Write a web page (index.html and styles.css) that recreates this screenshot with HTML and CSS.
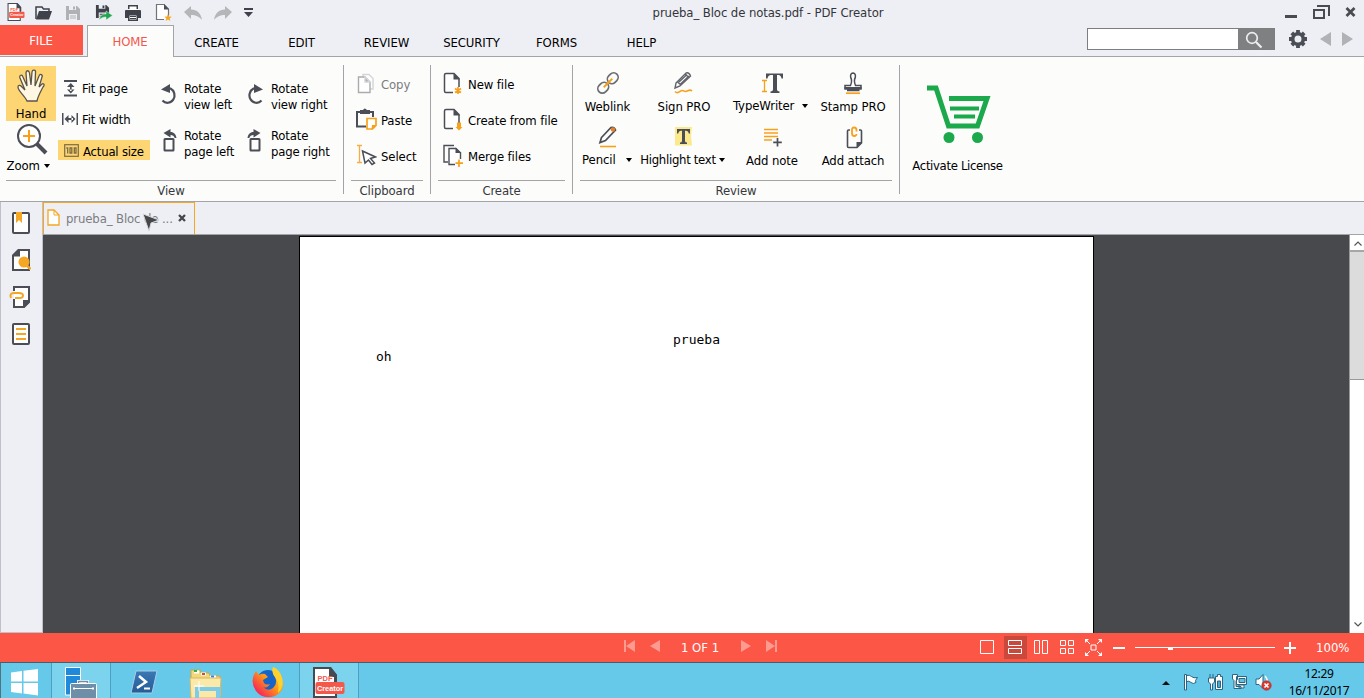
FILE: index.html
```html
<!DOCTYPE html>
<html lang="en">
<head>
<meta charset="utf-8">
<title>PDF Creator</title>
<link rel="stylesheet" href="styles.css">
</head>
<body>
<svg class="defs" width="0" height="0">
  <symbol id="rotl" viewBox="0 0 18 22">
    <path d="M6 4.500h3.500a7 7.500 0 1 1-8 12" fill="none" stroke="#4b4e57" stroke-width="2.200"/>
    <path d="M0 5.500 9 0v9z" fill="#4b4e57"/>
  </symbol>
  <symbol id="rotp" viewBox="0 0 18 24">
    <rect x="3.500" y="11" width="9" height="11.500" rx=".5" fill="none" stroke="#4b4e57" stroke-width="2"/>
    <path d="M2.500 5 9.500 1v3c3.500 0 5.500 2.500 6 6h-1.800c-.6-2-2-3-4.200-3v2.500z" fill="#4b4e57"/>
  </symbol>
  <symbol id="doc" viewBox="0 0 20 24">
    <path d="M10 20.500H2.800Q1.500 20.500 1.500 19V3q0-1.500 1.500-1.500h8l5 5V15" fill="#fff" stroke="#4b4e57" stroke-width="1.500"/>
    <path d="M10.500 1 17 7.500h-6.500z" fill="#4b4e57"/>
  </symbol>
  <symbol id="disk" viewBox="0 0 16 16">
    <path d="M1 1h11l3 3v11H1z"/><path d="M4 1h7v4H4zM4 9h8v6H4z" fill="#eeeff4"/><path d="M8 1.500h2v3H8zM5 10.500h6v1H5zM5 12.500h6v1H5z"/>
  </symbol>
</svg>

<div class="app">
  <header class="titlebar">
    <div class="quick">
      <svg class="q-app logo" width="18" height="18" viewBox="0 0 34 34"><path d="M2 1h17l6 7v25H2z" fill="#fff" stroke="#484a52" stroke-width="2"/><path d="M18 0h2l7 8v8h-3V10h-6z" fill="#484a52"/><rect x="4" y="16.500" width="29" height="12" rx="2" fill="#f4584a"/><text x="6" y="14.500" font-size="7.500" font-weight="700" fill="#f4584a">PDF</text><text x="6" y="25.200" font-size="7.500" font-weight="700" fill="#fff" textLength="25" lengthAdjust="spacingAndGlyphs">Creator</text></svg>
      <svg width="18" height="16" viewBox="0 0 18 16"><path d="M1 14V2h6l1.500 2H14v3" fill="none" stroke="#3f424b" stroke-width="1.500"/><path d="M4 6h13l-3 8.500H1z" fill="#3f424b"/></svg>
      <svg width="16" height="16" fill="#b0b1b5"><use href="#disk"/></svg>
      <svg class="q-gap" width="18" height="17" viewBox="0 0 18 17"><g fill="#3f424b"><use href="#disk" width="15" height="15"/></g><path d="M4 16c1-4 3-6 7-6V7l6.500 4.500L11 16v-3c-3 0-5 1-7 3z" fill="#1ea84b" stroke="#eeeff4" stroke-width=".5"/></svg>
      <svg width="16" height="16" viewBox="0 0 16 16" fill="#3f424b"><path d="M3 0h10v4H3zM1 5h14q1 0 1 1v7h-3v-3H3v3H0V6q0-1 1-1z"/><path d="M4.500 1.500h7V5h-7zM4 10h8v5.300H4z" fill="#fff"/><path d="M3 9h10v7H3zm1.500 1.500v4h7v-4zM5 11h6v1H5zm0 2h6v1H5z"/></svg>
      <svg class="q-gap" width="17" height="19" viewBox="0 0 17 19"><path d="M9 16.500H1.500V1.500H9L13.500 6v7" fill="#fff" stroke="#70737a" stroke-width="1.200"/><path d="M9 1 14 6.500H9z" fill="#4b4e57"/><path d="m13 11 1.100 2.500 2.600.2-2 1.700.7 2.600-2.400-1.400-2.300 1.400.7-2.600-2-1.700 2.600-.2z" fill="#f5a623"/></svg>
      <svg width="18" height="14" viewBox="0 0 18 14"><path d="M0 6 7 0v3.500c6 .2 10 3.500 11 10.500-3-3.500-6-5-11-5V13z" fill="#b5b6ba"/></svg>
      <svg width="18" height="14" viewBox="0 0 18 14"><path d="M18 6 11 0v3.500C5 3.700 1 7 0 14c3-3.500 6-5 11-5v4z" fill="#b5b6ba"/></svg>
      <svg class="q-menu" width="9" height="9" viewBox="0 0 9 9" fill="#3f424b"><path d="M0 0h9v2H0zM0 4h9L4.500 9z"/></svg>
    </div>
    <div class="title">prueba_ Bloc de notas.pdf - PDF Creator</div>
    <svg class="win" width="76" height="16" viewBox="0 0 76 16" fill="none" stroke="#4a4b4f"><path d="M1 12.500h12" stroke-width="3"/><path d="M30 6h10v8H30zM33 2h12v10" stroke-width="2"/><path d="m62.500 4 8 8m0-8-8 8" stroke-width="2.700"/></svg>
  </header>

  <nav class="tabs">
    <div class="file">FILE</div>
    <div class="home">HOME</div>
    <div class="tab">CREATE</div><div class="tab">EDIT</div><div class="tab">REVIEW</div><div class="tab">SECURITY</div><div class="tab">FORMS</div><div class="tab">HELP</div>
    <div class="search"><span class="search-btn"><svg width="18" height="18" viewBox="0 0 18 18" fill="none" stroke="#eee" stroke-width="1.700"><circle cx="7" cy="7" r="5.300"/><path d="m11 11 5.500 5.500" stroke-width="2.200"/></svg></span></div>
    <svg class="gear" width="18" height="18" viewBox="-9 -9 18 18" fill="none" stroke="#4b4e57"><circle r="5.300" stroke-width="3.600"/><path d="M0-9v3M0 9V6M-9 0h3M9 0H6M-6.200-6.200l2 2M6.200-6.200l-2 2M-6.200 6.200l2-2M6.200 6.200l-2-2" stroke-width="3.800"/></svg>
    <svg class="arrows" width="34" height="14" viewBox="0 0 34 14" fill="#b1b2b6"><path d="M11 0v14L0 7zM22 0v14l11-7z"/></svg>
  </nav>

  <section class="ribbon">
    <div class="group g-view">
      <div class="body">
        <div class="col-big">
          <div class="big hand"><svg width="28" height="34" viewBox="0 0 28 34"><path d="M10 32C8 27 1 22 1 18c0-2 2-2 3-1l4 4L3 9C2 6 5 5 6 8l4 9L9 4c0-3 3-3 3.500 0L14 16l1-13c.5-3 4-2 3.500 0L18 17l4-10c1-3 4-1 3 1l-3 10 3-3c2-1 3 1 1 3-3 6-5 9-6 14z" fill="#fff7e3" stroke="#5a5549" stroke-width="1.300"/></svg><span>Hand</span></div>
          <div class="big zoom"><svg width="32" height="32" viewBox="0 0 32 32"><circle cx="13" cy="13" r="11" fill="#fff" stroke="#4b4e57" stroke-width="2"/><path d="m21 21 9 9" stroke="#4b4e57" stroke-width="4"/><path d="M13 7v12M7 13h12" stroke="#f9a01b" stroke-width="2"/></svg><span>Zoom <i class="caret"></i></span></div>
        </div>
        <div class="col-fit">
          <div class="row"><svg width="14" height="17" viewBox="0 0 14 17" fill="#4b4e57"><path d="M0 0h13v2H0zM0 14.500h13v2H0zM6 5h1.600v6H6zM3 7l3.800-4L10.500 7zM3 9.500l3.800 4 3.700-4z"/></svg><span>Fit page</span></div>
          <div class="row fw"><svg width="17" height="14" viewBox="0 0 17 14" fill="#4b4e57"><path d="M0 1h1.500v12H0zM14.500 1H16v12h-1.500zM2.500 7l4-4v8zM13.500 7l-4-4v8zM5 6h6v2H5z"/></svg><span>Fit width</span></div>
          <div class="row actual"><svg width="15" height="13" viewBox="0 0 15 13" fill="none" stroke="#7d6c42"><rect x=".7" y=".7" width="13.600" height="11.600" stroke-width="1.200"/><path d="M2.300 4h1.400v5.500M6 4h1.800v5H6zM10.300 4H12v5h-1.700z" stroke-width="1.300"/></svg><span>Actual size</span></div>
        </div>
        <div class="rot">
          <div class="r"><svg width="18" height="22"><use href="#rotl"/></svg><span>Rotate<br>view left</span></div>
          <div class="r"><svg class="flip" width="18" height="22"><use href="#rotl"/></svg><span>Rotate<br>view right</span></div>
          <div class="r"><svg width="18" height="24"><use href="#rotp"/></svg><span>Rotate<br>page left</span></div>
          <div class="r"><svg class="flip" width="18" height="24"><use href="#rotp"/></svg><span>Rotate<br>page right</span></div>
        </div>
      </div>
      <div class="label">View</div>
    </div>

    <div class="group g-clip">
      <div class="body list">
        <div class="li off"><svg width="22" height="24" viewBox="0 0 22 24" fill="#fff" stroke="#d4d5d7" stroke-width="1.400"><path d="M8 2.500h6l4 4V17H8z"/><path d="M3.500 5H10l5 5v10.500H3.500z" stroke="#aaabad"/><path d="M10 5v5h5z" fill="#aaabad"/></svg><span>Copy</span></div>
        <div class="li"><svg width="22" height="24" viewBox="0 0 22 24"><path d="M11 18.500H2V4h16v5" fill="none" stroke="#4b4e57" stroke-width="2"/><path d="M5 2h3q1.500-3 4 0h3v4H5z" fill="#4b4e57"/><path d="M12 10.500h9v7L17.500 21H12z" fill="#fff" stroke="#f9a01b" stroke-width="1.700"/><path d="M17 17h4.500l-5 5z" fill="#f9a01b"/></svg><span>Paste</span></div>
        <div class="li"><svg width="22" height="24" viewBox="0 0 22 24" fill="none"><path d="M2 1.500h5M4.500 1.500v17M2 18.500h5" stroke="#f5ad45" stroke-width="1.300"/><path d="m7.500 7 13 6-5 1.500 4 4.500-2.500 1.500-3.500-4.500-3.500 3z" fill="#fff" stroke="#4b4e57" stroke-width="1.500"/></svg><span>Select</span></div>
      </div>
      <div class="label">Clipboard</div>
    </div>

    <div class="group g-create">
      <div class="body list">
        <div class="li"><svg width="20" height="24" viewBox="0 0 20 24"><use href="#doc"/><path d="M15 15v7M12 16.500l6 4m0-4-6 4" stroke="#f9a01b" stroke-width="1.700"/></svg><span>New file</span></div>
        <div class="li"><svg width="20" height="24" viewBox="0 0 20 24"><use href="#doc"/><path d="M14 14.500h4V19h1.500L16 22.500 12.500 19H14z" fill="#f9a01b"/></svg><span>Create from file</span></div>
        <div class="li"><svg width="20" height="24" viewBox="0 0 20 24"><path d="M5 18H1V1.500h10" fill="none" stroke="#4b4e57" stroke-width="1.400"/><path d="M12 20.500H6V4.500h7l4.500 4.500v6" fill="#fff" stroke="#4b4e57" stroke-width="1.400"/><path d="M12.500 3.500 18.500 9h-6z" fill="#4b4e57"/><path d="M16 15.500V23M12.500 19.200H20" stroke="#f9a01b" stroke-width="1.700"/></svg><span>Merge files</span></div>
      </div>
      <div class="label">Create</div>
    </div>

    <div class="group g-review">
      <div class="body tools">
        <div class="t"><svg width="24" height="24" viewBox="0 0 24 24" fill="none" stroke="#6b6d73" stroke-width="1.700"><g transform="rotate(-45 12 12)"><rect x="-.5" y="7.500" width="11.500" height="9" rx="4.500"/><rect x="13" y="7.500" width="11.500" height="9" rx="4.500"/><path d="M6 12h12" stroke="#f9a01b" stroke-width="2"/></g></svg><span>Weblink</span></div>
        <div class="t"><svg width="24" height="24" viewBox="0 0 24 24" fill="none"><path d="m4 12 10-10q3-1 4.500 3L8 15l-5 2zM13 3l4.500 4M5.500 11 9 14M7 11l8-7.500M8.500 13 17 5" stroke="#62646b" stroke-width="1.400"/><path d="M3 20.500c4 4 5-3 9-.5 3 2 5-3 8 0" stroke="#f9a01b" stroke-width="1.500"/></svg><span>Sign PRO</span></div>
        <div class="t up"><svg width="24" height="24" viewBox="0 0 24 24"><path d="M6 2.500h17v5h-1.500Q21 4 18.500 4H17v14.500q0 2 2.500 2V22h-9v-1.500q2.500 0 2.500-2V4h-2Q8 4 7.500 7.500H6z" fill="#4b4e57"/><path d="M2 9.500h5M4.500 9.500v11M2 20.500h5" stroke="#f9a01b" stroke-width="1.300"/></svg><span>TypeWriter <i class="caret"></i></span></div>
        <div class="t"><svg width="24" height="24" viewBox="0 0 24 24"><path d="M9.500 14.500q2-5 .2-8-.7-4 2.300-4.500 3 .5 2.300 4.500-1.800 3 .2 8H20v3.500H4v-3.500z" fill="#fff" stroke="#4b4e57" stroke-width="1.500"/><path d="M3.500 16h17v2h-2v2.200H6V18H3.500z" fill="#4b4e57"/><path d="M5 22.200h14" stroke="#f9a01b" stroke-width="1.700"/></svg><span>Stamp PRO</span></div>
        <div class="t up2"><svg width="24" height="24" viewBox="0 0 24 24" fill="none"><path d="M5.500 12.500 15 2.500q3-1 4.500 2.500l-10 10.500-5.500 2z" stroke="#4b4e57" stroke-width="1.700"/><circle cx="17" cy="4.500" r="2.200" fill="#e87e20"/><path d="M4 21.500h16" stroke="#f9a01b" stroke-width="1.600"/></svg><span>Pencil &nbsp;<i class="caret"></i></span></div>
        <div class="t up2 hl"><svg width="24" height="24" viewBox="0 0 24 24"><path d="M3 2h17l-1 9 1 9.500H3z" fill="#fce98c"/><path d="M5 4h13v4.500h-1.300Q16.300 5.700 14 5.700h-1V16q0 1.500 2 1.500V19H8v-1.500q2 0 2-1.500V5.700H9Q6.700 5.700 6.300 8.500H5z" fill="#4b4e57"/></svg><span>Highlight text<i class="caret"></i></span></div>
        <div class="t"><svg width="24" height="24" viewBox="0 0 24 24" fill="none" stroke="#f9a01b" stroke-width="1.700"><path d="M4 4.500h14M4 8h14M4 11.500h14M4 15h8"/><path d="M17.500 13v8.500M13.200 17.300h8.600" stroke="#4b4e57"/></svg><span>Add note</span></div>
        <div class="t"><svg width="24" height="24" viewBox="0 0 24 24" fill="none"><path d="M9 5H7.500q-1 0-1 1v15.500q0 1 1 1h8.500l4.500-4.500V6q0-1-1-1H18" stroke="#4b4e57" stroke-width="1.600"/><path d="M21 17v.5L15.500 23v-6z" fill="#4b4e57"/><path d="M15.500 6.500V5q0-2.500-2.300-2.500T11 5v3.500q0 2.500 2.300 2.500 2 0 2.200-2" stroke="#f9a01b" stroke-width="1.800"/></svg><span>Add attach</span></div>
      </div>
      <div class="label">Review</div>
    </div>

    <div class="license">
      <svg width="64" height="60" viewBox="0 0 64 60" fill="none" stroke="#1ba94c"><path d="M0 3h9l12.500 38h29l9.500-27.500H22" stroke-width="5"/><path d="M23 23.500h29M27 31.500h21" stroke-width="4"/><circle cx="22" cy="52.500" r="5.500" fill="#1ba94c" stroke="none"/><circle cx="50.500" cy="52.500" r="5.500" fill="#1ba94c" stroke="none"/></svg>
      <span>Activate License</span>
    </div>
  </section>

  <main class="work">
    <aside class="side">
      <svg width="20" height="24" viewBox="0 0 20 24"><rect x="2" y="2" width="16" height="20" rx="1" fill="#fff" stroke="#4b4e57" stroke-width="2"/><path d="M5 1h6v11l-3-3-3 3z" fill="#f5a623"/></svg>
      <svg width="20" height="24" viewBox="0 0 20 24"><path d="M2 8 8 2h10v20H2z" fill="#fff" stroke="#4b4e57" stroke-width="2"/><path d="M1 8.500V7l6-6h2v7.500z" fill="#4b4e57"/><circle cx="13" cy="14" r="5.500" fill="#f5a623"/><path d="m15 17 4.500 4" stroke="#f5a623" stroke-width="2.500"/></svg>
      <svg class="clip" width="20" height="24" viewBox="0 0 20 24"><path d="M3 6V2h15v15l-5 5H3v-8" fill="#fff" stroke="#4b4e57" stroke-width="2"/><path d="M19 15v2l-6 6h-1v-8z" fill="#4b4e57"/><path d="M0 13q-2-5 3-5h5q4 0 4 2.500T8 13H4" fill="none" stroke="#f5a623" stroke-width="2"/></svg>
      <svg width="20" height="24" viewBox="0 0 20 24"><rect x="2" y="2" width="16" height="20" rx="1" fill="#fff" stroke="#4b4e57" stroke-width="2"/><path d="M5 7h10M5 12h10M5 17h10" stroke="#f5a623" stroke-width="2"/></svg>
    </aside>
    <div class="docs">
      <div class="doctabs">
        <div class="doctab">
          <svg width="13" height="17" viewBox="0 0 13 17"><path d="M1 1h6l5 5v10H1z" fill="#fff" stroke="#f5a623" stroke-width="1.300"/><path d="M7 1v5h5" fill="none" stroke="#f5a623"/></svg>
          <span>prueba_ Bloc de ...</span>
          <svg class="x" width="8" height="8" viewBox="0 0 8 8"><path d="m1 1 6 6m0-6L1 7" stroke="#44464d" stroke-width="2.300"/></svg>
          <svg class="cursor" width="18" height="20" viewBox="0 0 18 20"><path d="m1 2 16 6-8 3-2 8z" fill="#45474d" stroke="#d8d9dc" stroke-width="1"/></svg>
        </div>
      </div>
      <div class="view">
        <div class="canvas"><article class="page"><p class="center">prueba</p><p class="left">oh</p></article></div>
        <div class="scroll">
          <div class="sb"><svg width="8" height="5" viewBox="0 0 8 5"><path d="m.5 4.500 3.500-3.500 3.500 3.500" fill="none" stroke="#555" stroke-width="1.200"/></svg></div>
          <div class="thumb"></div>
          <div class="track"></div>
          <div class="sb dn"><svg width="8" height="5" viewBox="0 0 8 5"><path d="m.5.500 3.500 3.500 3.500-3.500" fill="none" stroke="#555" stroke-width="1.200"/></svg></div>
        </div>
      </div>
    </div>
  </main>

  <footer class="status">
    <div class="pager">
      <svg width="38" height="12" viewBox="0 0 38 12" fill="#fd9b90"><path d="M0 0h2v12H0zM11 0v12L2 6zM36 0v12L26 6z"/></svg>
      <span>1 OF 1</span>
      <svg width="38" height="12" viewBox="0 0 38 12" fill="#fd9b90"><path d="M0 0v12l10-6zM25 0v12l9-6zM34 0h2v12h-2z"/></svg>
    </div>
    <div class="modes">
      <svg width="15" height="15" viewBox="0 0 15 15"><path d="M.5.500h13v13H.5z"/></svg>
      <span class="on"><svg width="15" height="15" viewBox="0 0 15 15"><path d="M.5.500h13v5H.5zM.5 8.500h13v5H.5z"/></svg></span>
      <svg width="15" height="15" viewBox="0 0 15 15"><path d="M.5.500h5v13h-5zM8.500.500h5v13h-5z"/></svg>
      <svg width="15" height="15" viewBox="0 0 15 15"><path d="M.5.500h5v5h-5zM8.500.500h5v5h-5zM.5 8.500h5v5h-5zM8.500 8.500h5v5h-5z"/></svg>
      <svg width="17" height="17" viewBox="0 0 17 17"><path d="M6 6h5v5H6zM2 2l3 3M15 2l-3 3M2 15l3-3M15 15l-3-3"/><path d="M0 0h4L0 4zM17 0v4l-4-4zM0 17v-4l4 4zM17 17h-4l4-4z" fill="#fff" stroke="none"/></svg>
      <svg class="slider" width="183" height="12" viewBox="0 0 183 12"><path d="M0 6h12M171 6h12M177 0v12" stroke-width="2"/><path d="M22 5.500h140"/><path d="M55 6.500h5" stroke-width="3"/></svg>
    </div>
    <span class="pct">100%</span>
  </footer>

  <div class="taskbar">
    <div class="tb start"><svg width="28" height="28" viewBox="0 0 28 28" fill="#fff"><path d="M0 4.500 11 3v10.500H0zM12.500 2.800 27 1v12.500H12.500zM0 15h11v10.500L0 24zM12.500 15H27v12.500l-14.500-2z"/></svg></div>
    <div class="tb open srv"><svg width="34" height="34" viewBox="0 0 34 34"><path d="M1.500 1.500h15V29h-15z" fill="#1e8ad9" stroke="#fff"/><path d="M1 9.500h16" stroke="#fff"/><path d="M14.500 18v-2.500h9V18" fill="none" stroke="#fff" stroke-width="3"/><path d="M14.500 18v-2.500h9V18" fill="none" stroke="#6f8ea8" stroke-width="1.500"/><rect x="6.500" y="17.500" width="26" height="18" rx="1" fill="#6f8ea8" stroke="#fff"/><path d="M9 22.500h21M10 21v3M29 21v3" stroke="#fff"/></svg></div>
    <div class="tb"><svg class="ps" width="28" height="24" viewBox="0 0 28 24"><defs><linearGradient id="ps" x2="0" y2="1"><stop stop-color="#3b78b5"/><stop offset="1" stop-color="#255c96"/></linearGradient></defs><path d="M6 1h21l-5 22H1z" fill="url(#ps)" stroke="#a8cde8"/><path d="m9 6 7 6-9 6" fill="none" stroke="#fff" stroke-width="2.500"/><path d="M14 18.500h6" stroke="#fff" stroke-width="2"/></svg></div>
    <div class="tb"><svg class="folder" width="34" height="30" viewBox="0 0 34 30"><path d="M2 1h9l1 3h8l1 3h10v22H2z" fill="#f3d77b" stroke="#cda64a"/><path d="M5 3h5M12 5h5M21 8h6" stroke="#fff" stroke-width="3"/><path d="M5 2h3" stroke="#2eb34b" stroke-width="2"/><path d="M13 5h3" stroke="#d24c27" stroke-width="2"/><path d="M22 7.500h3" stroke="#2d86d9" stroke-width="2"/><path d="M1 9h31l-1 20H2z" fill="#fae9a8" stroke="#d7b863"/><path d="M8 30V20h21v10" fill="none" stroke="#7ccbe9" stroke-width="4"/><path d="M5 17h10M10 12v10" stroke="#fff"/></svg></div>
    <div class="tb"><svg class="fox" width="32" height="32" viewBox="0 0 32 32"><defs><linearGradient id="ff" x1="1" y1="0" x2="0" y2="1"><stop stop-color="#ffe73d"/><stop offset=".45" stop-color="#ff9b16"/><stop offset=".8" stop-color="#f9324f"/><stop offset="1" stop-color="#e31587"/></linearGradient></defs><circle cx="16" cy="15" r="11" fill="#1764c8"/><path d="M4 5 7 9q3-2 6-1l3 3-5 3q1 6 7 4-3 5-7 3 5 5 10 1 5-4 2-11-3-3-2-10 7 3 9 11 4 13-7 18Q11 34 4 25-3 15 4 5z" fill="url(#ff)"/><path d="M21 1q7 3 9 11 2 9-4 15 2-10-3-16-4-5-2-10z" fill="#ffd12d"/></svg></div>
    <div class="tb open pdf"><svg class="logo" width="34" height="32" viewBox="0 0 34 32"><path d="M2 2h16l6 7v22H2z" fill="#fff" stroke="#484a52" stroke-width="2"/><path d="M17 1h2l6 8v7h-3v-5h-5z" fill="#484a52"/><rect x="3.500" y="16" width="29" height="12" rx="2" fill="#f4584a"/><text x="5.500" y="14.500" font-size="7.500" font-weight="700" fill="#f4584a">PDF</text><text x="5" y="24.700" font-size="7.500" font-weight="700" fill="#fff" textLength="26" lengthAdjust="spacingAndGlyphs">Creator</text></svg></div>
    <div class="tray">
      <svg class="up-arrow" width="8" height="4" viewBox="0 0 8 4"><path d="M0 4 4 0l4 4z" fill="#111"/></svg>
      <svg width="17" height="18" viewBox="0 0 17 18" fill="#fff" stroke="#2f6480"><path d="M1.500 1.500h2V17h-2zM3.500 2.500q3-1 5 1t6 1l-2 3 .5 2q-3 2-5 0t-4.500-1z"/></svg>
      <svg width="17" height="18" viewBox="0 0 17 18" fill="#fff" stroke="#2f6480"><path d="M3 1v4M6 1v4M1.500 5h6v4l-2 2v6h-2v-6l-2-2zM8.500 3.500h2v-2h3v2h2v13h-7z"/><path d="M10.500 8h3v6.500h-3z" fill="#4da9cf"/></svg>
      <svg width="17" height="18" viewBox="0 0 17 18" fill="#fff" stroke="#2f6480"><path d="M5.500 3.500h10v8h-10zM8 12h5v3h-5zM1.500 1.500h5v5l-1.500 1v6h5v2H3v-8L1.500 6z"/><path d="M8 5.500h6v4H8z" fill="#62bfe0"/></svg>
      <svg width="17" height="18" viewBox="0 0 17 18"><path d="M1 6h3l4-4.500v14L4 11.500H1z" fill="#fff" stroke="#2f6480"/><path d="M10 3q3 3 2 6" fill="none" stroke="#fff" stroke-width="1.300"/><circle cx="11.500" cy="12.500" r="4.700" fill="#dc3a32" stroke="#9d2622" stroke-width=".6"/><path d="m9.500 10.500 4 4m0-4-4 4" stroke="#fff" stroke-width="1.600"/></svg>
      <div class="clock">12:29<br>16/11/2017</div>
    </div>
  </div>
</div>
</body>
</html>
```
FILE: styles.css
```css
* { box-sizing: border-box; }
body {
  margin: 0;
  font: 13px/16px "DejaVu Sans Condensed", "DejaVu Sans", sans-serif;
  font-stretch: condensed;
  letter-spacing: -.1px;
  color: #000;
  overflow: hidden;
}
svg { display: block; flex: none; }
.defs { position: absolute; }
.logo text { font-family: "Liberation Sans", sans-serif; letter-spacing: 0; }
.app { width: 1364px; height: 698px; display: flex; flex-direction: column; background: #eeeff4; }
.flip { transform: scaleX(-1); }
.caret {
  display: inline-block;
  margin-left: 1px;
  border: 3.5px solid transparent;
  border-top: 4px solid #000;
  border-bottom: 0;
  vertical-align: 2px;
}

/* title bar */
.titlebar { height: 25px; display: flex; }
.quick { display: flex; align-items: center; width: 300px; padding-left: 7px; gap: 12px; }
.quick .q-app { margin: -2px -2px 0 0; }
.quick .q-gap { margin-left: 2px; }
.title { width: 936px; padding: 5px 0 0; text-align: center; color: #33353a; }
.win { margin: 4px 0 0 48px; }

/* menu tabs */
.tabs { height: 32px; display: flex; border-bottom: 1px solid #a3a4a7; }
.file { width: 83px; height: 30px; margin-right: 4px; padding-right: 1px; background: #fc5646; color: #fff; text-align: center; line-height: 32px; }
.home { width: 87px; height: 32px; padding-right: 1px; background: #fcfcfb; border: 1px solid #a3a4a7; border-bottom: 0; color: #f4564a; text-align: center; line-height: 32px; }
.tab { width: 85px; text-align: center; line-height: 35px; }
.search { width: 188px; height: 22px; margin: 3px 0 0 403px; background: #fff; border: 1px solid #7d7e80; display: flex; justify-content: flex-end; }
.search-btn { width: 36px; background: #7f8082; display: flex; padding: 2px 0 0 7px; }
.gear { margin: 5px 0 0 14px; }
.arrows { margin: 7px 0 0 13px; }

/* ribbon */
.ribbon { height: 145px; background: #fcfcfb; border-bottom: 1px solid #a3a4a7; display: flex; }
.group { height: 129px; margin-top: 8px; border-right: 1px solid #a3a4a7; padding: 0 7px 0 6px; }
.body { height: 116px; border-bottom: 1px solid #a3a4a7; display: flex; }
.label { text-align: center; color: #36383c; padding-top: 2px; }
.g-view { width: 344px; }
.g-clip { width: 87px; padding-left: 7px; }
.g-create { width: 142px; padding-left: 7px; }
.g-review { width: 327px; padding-left: 7px; }
.col-big { width: 50px; padding-top: 1px; flex: none; }
.big { height: 55px; display: flex; flex-direction: column; align-items: center; justify-content: space-between; }
.hand { background: #fed573; padding-top: 3px; }
.hand span { margin-bottom: -1px; }
.zoom { padding: 2px 5px 0 0; height: 52px; justify-content: flex-start; gap: 3px; white-space: nowrap; }
.zoom svg { margin: 0 0 0 6px; }
.col-fit { width: 102px; padding: 13px 8px 0 2px; flex: none; white-space: nowrap; }
.row { height: 20px; display: flex; align-items: center; gap: 4px; padding-left: 6px; }
.row span { padding-top: 2px; }
.fw { margin: 11px 0; padding-left: 4px; gap: 3px; }
.actual { background: #fed573; width: 92px; letter-spacing: -.2px; }
.actual span { padding-top: 4px; }
.rot { display: grid; grid-template-columns: 87px 84px; grid-auto-rows: 47px; padding: 15px 0 0 3px; flex: none; width: 171px; white-space: nowrap; }
.r { display: flex; gap: 5px; letter-spacing: -.18px; }
.r span { padding-top: 1px; }
.r svg { margin-top: 4px; }
.r:nth-child(n+3) svg { margin-top: 1px; }
.r .flip { margin-left: -3px; margin-right: 3px; }

.list { flex-direction: column; padding-top: 1px; }
.li { height: 36px; display: flex; align-items: center; gap: 4px; white-space: nowrap; padding: 0 0 0 4px; }
.li span { padding-top: 2px; }
.off { color: #7b7c7e; }
.g-create .li { gap: 5px; padding-left: 5px; }

.tools { display: grid; grid-template-columns: 55px 98px 78px 84px; grid-auto-rows: 54px; padding-top: 6px; }
.t { display: flex; flex-direction: column; align-items: center; gap: 3px; white-space: nowrap; }
.t span { margin-top: 1px; }
.up span, .up2 span { margin-top: 0; }
.up span { margin-left: -3px; }
.up2 span { margin-left: -1px; }
.t .caret { margin-left: 3px; }
.up .caret { margin-left: 4px; }
.hl span { margin-left: -3px; letter-spacing: -.3px; }

.license { width: 115px; display: flex; flex-direction: column; align-items: center; padding-top: 28px; gap: 13px; }
.license svg { margin-left: 2px; }
.license span { letter-spacing: -.34px; }

/* document area */
.work { height: 431px; display: flex; }
.side { width: 43px; border: 1px solid #bfc0ca; border-top: 0; display: flex; flex-direction: column; gap: 13px; padding: 9px 0 0 10px; }
.clip { overflow: visible; }
.docs { width: 1321px; }
.doctabs { height: 33px; border-bottom: 1px solid #a3a4a7; display: flex; }
.doctab { position: relative; width: 152px; height: 32px; border: solid #f5a623; border-width: 1px 1px 0; color: #7b7c80; display: flex; align-items: center; gap: 6px; padding: 0 0 2px 3px; white-space: nowrap; }
.doctab span { padding-top: 2px; letter-spacing: -.12px; }
.doctab .x { margin-left: -1px; }
.cursor { position: absolute; left: 98px; top: 9px; }
.view { height: 398px; display: flex; }
.canvas { width: 1306px; height: 398px; background: #48494c; padding: 1px 0 0 256px; overflow: hidden; }
.page { width: 795px; height: 600px; background: #fff; border: 1px solid #000; overflow: hidden; font: 13px/17px "DejaVu Sans Mono", monospace; letter-spacing: 0; padding: 94px 76px; }
.page p { margin: 0; }
.center { text-align: center; }
.scroll { width: 15px; border-left: 1px solid #999; background: #fff; display: flex; flex-direction: column; }
.sb { height: 17px; display: flex; align-items: center; justify-content: center; padding: 2px 0 0 1px; border-bottom: 2px solid #a7a7a7; }
.dn { border-bottom: 0; padding-top: 0; }
.thumb { height: 128px; background: #dcdcdc; border-bottom: 1px solid #999; }
.track { flex: 1; }

/* status bar */
.status { height: 29px; background: #fc5646; color: #fff; display: flex; align-items: center; letter-spacing: 0; }
.pager { display: flex; align-items: center; margin-left: 624px; width: 355px; margin-top: -3px; }
.pager span { width: 79px; padding: 3px 3px 0 0; text-align: center; }
.modes { display: flex; align-items: center; gap: 11px; fill: none; stroke: #fff; width: 337px; }
.modes > svg:first-child { margin-left: 1px; margin-right: -2px; }
.on { width: 23px; height: 23px; background: #c9493d; display: flex; align-items: center; justify-content: center; margin-right: -4px; }
.modes > svg:nth-child(5) { margin-left: -1px; }
.modes .slider { margin-left: 0; }

/* taskbar */
.taskbar { height: 36px; background: #66c9ea; border-top: 1px solid #465f6b; display: flex; }
.tb { width: 62px; display: flex; align-items: flex-start; justify-content: center; padding-top: 7px; }
.start { width: 51px; padding: 5px 2px 0 0; border-left: 1px solid #55707e; }
.open { width: 60px; background: #7cd3ee; border: solid #4c9fbe; border-width: 0 1px; padding-top: 3px; }
.srv { margin-right: 1px; }
.ps { margin-left: 2px; }
.folder { margin: -1px 0 0 2px; }
.fox { margin: -4px 0 0 1px; }
.pdf { margin-left: 1px; }
.tray { margin-left: auto; display: flex; gap: 7px; padding: 10px 14px 0 0; }
.up-arrow { margin: 8px 6px 0 0; }
.clock { font: 12px/17px "Noto Sans", sans-serif; letter-spacing: -.35px; text-align: center; width: 62px; margin: -8px 0 0 9px; white-space: nowrap; }
```
